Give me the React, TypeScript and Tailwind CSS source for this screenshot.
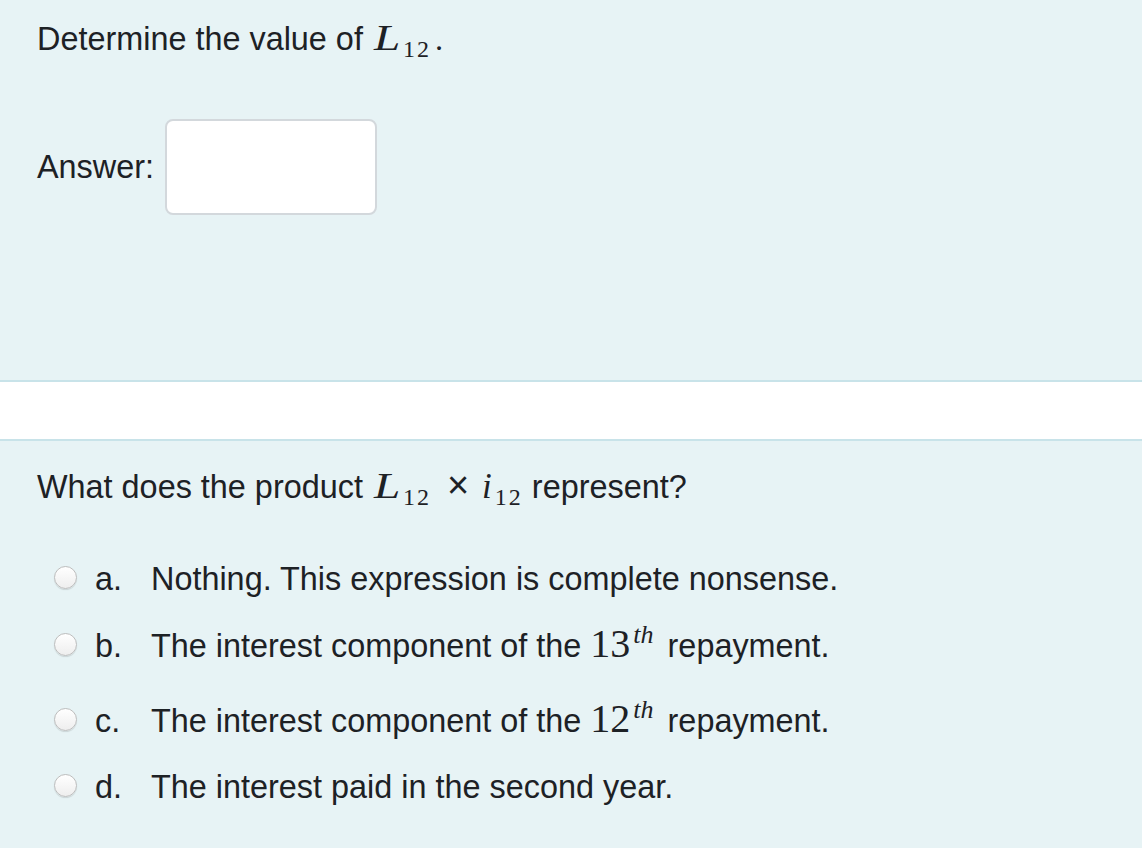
import React from "react";

const sans = { fontFamily: '"Liberation Sans", Arial, sans-serif' };

function Radio() {
  return (
    <span className="mb-[3px] inline-block h-[23px] w-[23px] shrink-0 rounded-full border border-[#bdbdbd] bg-gradient-to-b from-white to-[#eeeeee] shadow-[0_1px_1px_rgba(0,0,0,0.12)]" />
  );
}

function Sub({ base, sub, wide }: { base: string; sub: string; wide?: boolean }) {
  return (
    <span className="font-['Liberation_Serif',serif] leading-none whitespace-nowrap">
      {wide ? (
        <span className="ml-[2px] inline-block w-[29px] text-[35px] italic">
          <span className="inline-block origin-left scale-x-[1.35]">{base}</span>
        </span>
      ) : (
        <span className="mr-[3px] text-[35px] italic">{base}</span>
      )}
      <span className="relative top-[7px] text-[24px] tracking-[2px]">{sub}</span>
    </span>
  );
}

function Ordinal({ n }: { n: string }) {
  return (
    <span className="mr-[5px] font-['Liberation_Serif',serif] leading-none whitespace-nowrap">
      <span className="text-[40px]">{n}</span>
      <span className="relative -top-[14px] ml-[3px] text-[26px] italic">th</span>
    </span>
  );
}

const OPTIONS: { letter: string; mt: string; body: React.ReactNode }[] = [
  { letter: "a.", mt: "mt-[44px]", body: "Nothing. This expression is complete nonsense." },
  {
    letter: "b.",
    mt: "mt-[19px]",
    body: (
      <>
        The interest component of the <Ordinal n="13" /> repayment.
      </>
    ),
  },
  {
    letter: "c.",
    mt: "mt-[27px]",
    body: (
      <>
        The interest component of the <Ordinal n="12" /> repayment.
      </>
    ),
  },
  { letter: "d.", mt: "mt-[18px]", body: "The interest paid in the second year." },
];

export default function App() {
  return (
    <div className="flex h-[848px] flex-col bg-white text-[32.4px] text-[#1d2125]" style={sans}>
      {/* first question */}
      <div className="h-[382px] border-b-2 border-[#c8e3e9] bg-[#e7f3f5] px-[37px] pt-[15px]">
        <p className="leading-[48px]">
          Determine the value of <Sub base="L" sub="12" wide />
          <span className="ml-[4px] font-['Liberation_Serif',serif]">.</span>
        </p>
        <div className="mt-[56px] flex items-center gap-[11px]">
          <span className="leading-[48px]">Answer:</span>
          <input
            type="text"
            className="h-[96px] w-[212px] rounded-[8px] border-2 border-[#d3d8dc] bg-white px-3 outline-none"
          />
        </div>
      </div>

      <div className="h-[57px]" />

      {/* second question */}
      <div className="flex-1 border-t-2 border-[#c8e3e9] bg-[#e7f3f5] px-[37px] pt-[22px]">
        <p className="leading-[48px]">
          What does the product <Sub base="L" sub="12" wide />
          <span className="ml-[16px] mr-[13px] font-['Liberation_Sans',sans-serif] text-[38px] font-light leading-none">×</span>
          <Sub base="i" sub="12" /> represent?
        </p>
        <div className="pl-[17px]">
          {OPTIONS.map((o) => (
            <label key={o.letter} className={`${o.mt} flex h-[48px] items-center`}>
              <Radio />
              <span className="ml-[18px] w-[56px] leading-[48px]">{o.letter}</span>
              <span className="leading-[48px] whitespace-nowrap">{o.body}</span>
            </label>
          ))}
        </div>
      </div>
    </div>
  );
}
